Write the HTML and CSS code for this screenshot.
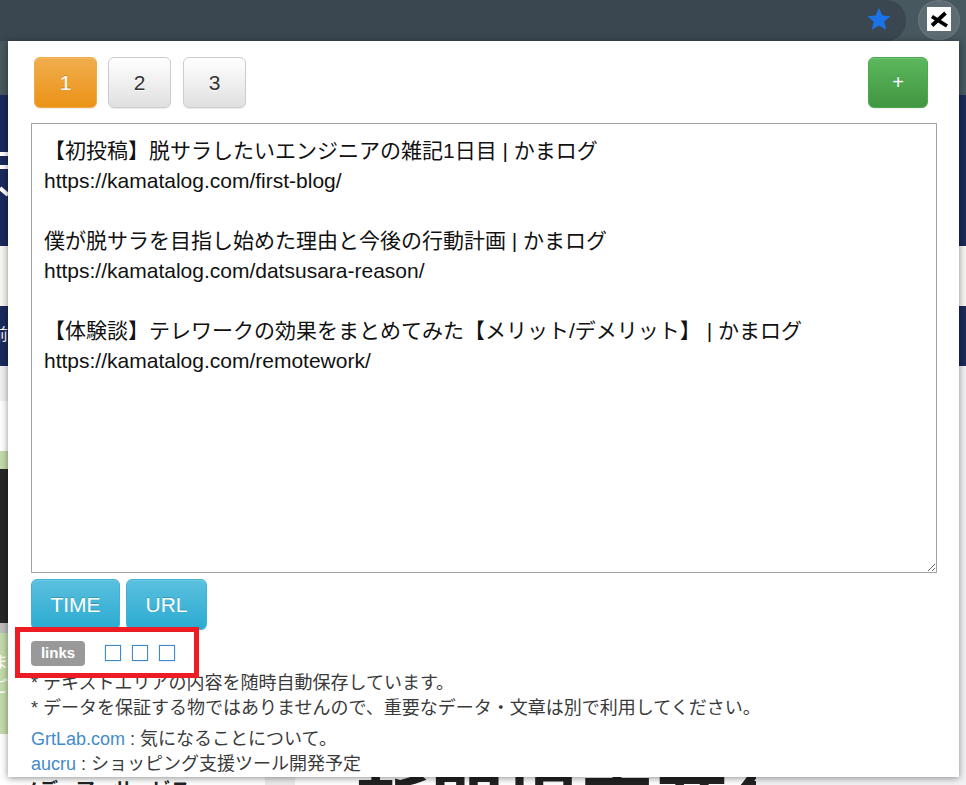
FILE: index.html
```html
<!DOCTYPE html>
<html lang="ja">
<head>
<meta charset="utf-8">
<title>Memo</title>
<link rel="stylesheet" href="styles.css">
</head>
<body>
<div class="screen">
  <header class="toolbar">
    <div class="omnibox">
      <svg class="star" viewBox="0 0 24 24" width="24" height="24"><path d="M12 .8l3.3 7.6 8.2.8-6.2 5.4 1.9 8.1L12 18.4l-7.2 4.3 1.9-8.1L.5 9.2l8.2-.8z"/></svg>
    </div>
    <div class="ext-btn">
      <span class="ext-icon">
        <svg viewBox="0 0 24 24" width="24" height="24"><path class="ext-x" d="M5 18.5L18.5 6M5 9.5l15 9.5"/></svg>
      </span>
    </div>
  </header>
  <div class="page">
    <div class="page-left">
      <div class="s-bar"></div>
      <div class="s-navy s-navy-a">
        <svg class="logo-bits" viewBox="0 0 8 150" width="8" height="150"><path d="M0 59h8M0 72h8M0 93l8 7"/></svg>
      </div>
      <div class="s-cream"></div>
      <div class="s-navy s-navy-b"><span class="clip-glyph">前</span></div>
      <div class="s-grey"></div>
      <div class="s-white"></div>
      <div class="s-green-a"></div>
      <div class="s-dark"></div>
      <div class="s-mid"></div>
      <div class="s-green-b"><span class="clip-glyph">ま</span><span class="clip-glyph">ご</span></div>
      <div class="s-foot">メディア・サービス</div>
    </div>
    <div class="page-mid">
      <div class="mid-grey"></div>
      <div class="headline">新聞提案募集</div>
    </div>
    <div class="page-right">
      <div class="s-bar"></div>
      <div class="s-navy s-navy-a"></div>
      <div class="s-cream"></div>
      <div class="s-navy s-navy-b"></div>
      <div class="s-lilac"></div>
    </div>
  </div>

  <main class="popup">
    <div class="tabs">
      <button class="btn btn-lg btn-warning tab">1</button>
      <button class="btn btn-lg btn-default tab tab-2">2</button>
      <button class="btn btn-lg btn-default tab tab-3">3</button>
      <button class="btn btn-lg btn-success add">+</button>
    </div>
    <textarea class="memo" spellcheck="false">【初投稿】脱サラしたいエンジニアの雑記1日目 | かまログ
https://kamatalog.com/first-blog/

僕が脱サラを目指し始めた理由と今後の行動計画 | かまログ
https://kamatalog.com/datsusara-reason/

【体験談】テレワークの効果をまとめてみた【メリット/デメリット】 | かまログ
https://kamatalog.com/remotework/</textarea>
    <div class="actions">
      <button class="btn btn-lg btn-info act-time">TIME</button>
      <button class="btn btn-lg btn-info act-url">URL</button>
    </div>
    <div class="links-row">
      <span class="label">links</span>
      <a class="tofu tofu-first" href="#"></a>
      <a class="tofu" href="#"></a>
      <a class="tofu" href="#"></a>
    </div>
    <p class="note">* テキストエリアの内容を随時自動保存しています。<br>* データを保証する物ではありませんので、重要なデータ・文章は別で利用してください。</p>
    <p class="credits"><a href="#">GrtLab.com</a> : 気になることについて。<br><a href="#">aucru</a> : ショッピング支援ツール開発予定</p>
  </main>
  <div class="highlight"></div>
</div>
</body>
</html>
```
FILE: styles.css
```css
* { box-sizing: border-box; }
html, body { margin: 0; padding: 0; }
body {
  width: 966px;
  height: 785px;
  overflow: hidden;
  background: #fff;
  font-family: "Liberation Sans", "Noto Sans CJK JP", sans-serif;
  color: #333;
}
.screen { position: relative; width: 966px; height: 785px; overflow: hidden; }

/* browser toolbar */
.toolbar {
  height: 41px;
  display: flex;
  align-items: flex-start;
  background: #47585e;
}
.omnibox {
  width: 906px;
  height: 41px;
  background: #3b4750;
  border-radius: 0 20px 20px 0;
  display: flex;
  justify-content: flex-end;
  padding: 7px 15px 0 0;
}
.star { fill: #1a73e8; }
.ext-btn {
  width: 42px;
  height: 40px;
  margin-left: 12px;
  border-radius: 50%;
  background: #5d6c72;
  border: 1px solid #6b797e;
  display: flex;
  justify-content: center;
  padding-top: 6px;
}
.ext-icon { display: block; width: 24px; height: 24px; background: #fff; }
.ext-icon svg { display: block; }
.ext-x { fill: none; stroke: #000; stroke-width: 3.8; }

/* page behind the popup */
.page { display: flex; height: 744px; }
.page-left { flex: none; width: 265px; display: flex; flex-direction: column; }
.page-mid { flex: 1; min-width: 0; overflow: hidden; background: #fff; position: relative; padding-top: 733px; }
.page-right { flex: none; width: 210px; display: flex; flex-direction: column; }
.s-bar { height: 54px; background: #47585e; flex: none; }
.s-navy { background: #1b2a5c; flex: none; }
.s-navy-a { height: 151px; }
.s-navy-b { height: 60px; }
.s-cream { height: 60px; background: #f7f6f3; flex: none; }
.s-grey { height: 35px; background: #f1f1f4; flex: none; }
.s-white { height: 50px; background: #fff; flex: none; }
.s-green-a { height: 18px; background: #c3dbaa; flex: none; }
.s-dark { height: 154px; background: #262826; flex: none; }
.s-mid { height: 10px; background: #bdbdbd; flex: none; }
.s-green-b { height: 101px; background: #c3dbaa; flex: none; padding-top: 18px; }
.s-lilac { flex: 1; background: #f2f2f5; }
.s-foot {
  padding: 46px 0 0 20px;
  font-size: 19px;
  line-height: 22px;
  font-weight: 700;
  color: #222;
  white-space: nowrap;
}
.logo-bits { display: block; fill: none; stroke: #fff; stroke-width: 4; }
.clip-glyph {
  display: block;
  width: 8px;
  overflow: hidden;
  color: #fff;
  font-size: 16px;
  line-height: 24px;
  text-indent: -8px;
  white-space: nowrap;
}
.s-navy-b .clip-glyph { padding-top: 18px; line-height: 22px; }
.mid-grey { position: absolute; left: 0; bottom: 0; width: 30px; height: 20px; background: #ececec; }
.headline {
  margin-left: 90px;
  font-size: 74px;
  line-height: 74px;
  font-weight: 700;
  color: #222;
  white-space: nowrap;
  letter-spacing: 1px;
}

/* popup */
.popup {
  position: absolute;
  left: 8px;
  top: 41px;
  width: 951px;
  height: 736px;
  overflow: hidden;
  background: #fff;
  padding: 16px 23px 0;
  box-shadow: 0 1px 7px rgba(0, 0, 0, .45);
}
.btn {
  display: block;
  margin: 0;
  height: 51px;
  padding: 0;
  font-family: inherit;
  font-size: 21px;
  border: 1px solid transparent;
  border-radius: 6px;
  cursor: pointer;
  box-shadow: inset 0 1px 0 rgba(255, 255, 255, .15), 0 1px 1px rgba(0, 0, 0, .075);
}
.btn-warning { color: #fff; background: linear-gradient(#f0ad4e, #eb9316); border-color: #f0a945; text-shadow: 0 -1px 0 rgba(0, 0, 0, .2); }
.btn-default { color: #333; background: linear-gradient(#fff, #e0e0e0); border-color: #ccc; text-shadow: 0 1px 0 #fff; }
.btn-success { color: #fff; background: linear-gradient(#5cb85c, #419641); border-color: #4ea94e; text-shadow: 0 -1px 0 rgba(0, 0, 0, .2); }
.btn-info { color: #fff; background: linear-gradient(#5bc0de, #2aabd2); border-color: #3fb3d6; text-shadow: 0 -1px 0 rgba(0, 0, 0, .2); }

.tabs { display: flex; padding-left: 3px; }
.tab { width: 63px; }
.tab-2 { margin-left: 11px; }
.tab-3 { margin-left: 12px; }
.add { width: 60px; margin-left: auto; margin-right: 8px; font-size: 20px; }

.memo {
  display: block;
  width: 906px;
  height: 450px;
  margin: 15px 0 6px;
  padding: 12px;
  border: 1px solid #a3a3a3;
  border-radius: 0;
  outline: none;
  font-family: "Liberation Sans", "Noto Sans CJK JP", sans-serif;
  font-size: 21px;
  line-height: 30px;
  color: #111;
  background: #fff;
  resize: vertical;
}

.actions { display: flex; gap: 6px; }
.act-time { width: 89px; }
.act-url { width: 81px; }

.links-row { display: flex; align-items: center; height: 25px; margin-top: 11px; }
.label {
  display: block;
  width: 54px;
  height: 25px;
  border-radius: 4px;
  background: #999;
  color: #fff;
  font-size: 15px;
  font-weight: 700;
  line-height: 24px;
  text-align: center;
}
.tofu {
  display: block;
  width: 16px;
  height: 16px;
  margin-left: 11px;
  margin-bottom: 2px;
  border: 1px solid #428bca;
  box-shadow: 0 0 1px rgba(66, 139, 202, .7);
}
.tofu-first { margin-left: 20px; }

.note {
  margin: 5px 0 0;
  font-size: 18px;
  line-height: 25px;
  color: #3a3a3a;
  white-space: nowrap;
}
.credits {
  margin: 6px 0 0;
  font-size: 18px;
  line-height: 25px;
  color: #3a3a3a;
  white-space: nowrap;
}
.credits a { color: #428bca; text-decoration: none; }

.highlight {
  position: absolute;
  left: 15px;
  top: 627px;
  width: 184px;
  height: 51px;
  border: 5px solid #ed1c24;
}
```
